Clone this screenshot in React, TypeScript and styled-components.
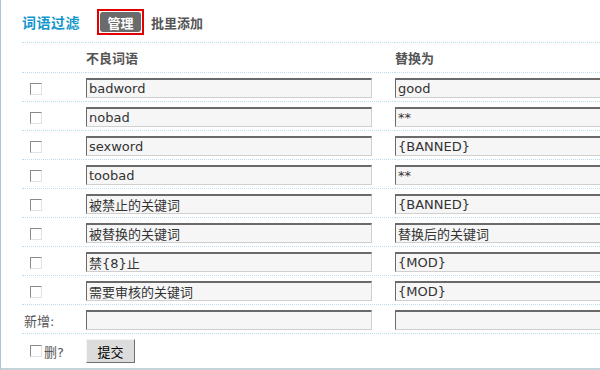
import React from 'react'
import styled, { createGlobalStyle } from 'styled-components'

const GlobalStyle = createGlobalStyle`
  body {
    margin: 0;
    overflow: hidden;
    background: #fff;
    font-family: 'DejaVu Sans', 'Noto Sans CJK SC', sans-serif;
    font-size: 12px;
    color: #555;
  }
`

const words = [
  { find: 'badword', replace: 'good' },
  { find: 'nobad', replace: '**' },
  { find: 'sexword', replace: '{BANNED}' },
  { find: 'toobad', replace: '**' },
  { find: '被禁止的关键词', replace: '{BANNED}' },
  { find: '被替换的关键词', replace: '替换后的关键词' },
  { find: '禁{8}止', replace: '{MOD}' },
  { find: '需要审核的关键词', replace: '{MOD}' },
]

export default function App() {
  return (
    <>
      <GlobalStyle />
      <Frame>
        <Tabs>
          <Title>词语过滤</Title>
          <ActiveTab>
            <span>管理</span>
          </ActiveTab>
          <Tab>批里添加</Tab>
        </Tabs>
        <Grid>
          <colgroup>
            <col style={{ width: 64 }} />
            <col style={{ width: 309 }} />
            <col />
          </colgroup>
          <thead>
            <tr>
              <Head />
              <Head>不良词语</Head>
              <Head>替换为</Head>
            </tr>
          </thead>
          <tbody>
            {words.map((w, i) => (
              <tr key={i}>
                <Cell><Check type="checkbox" /></Cell>
                <Cell><Field defaultValue={w.find} /></Cell>
                <Cell><Field defaultValue={w.replace} /></Cell>
              </tr>
            ))}
            <tr>
              <Cell><Label>新增:</Label></Cell>
              <Cell><Field /></Cell>
              <Cell><Field /></Cell>
            </tr>
            <tr>
              <FootCell>
                <DelLabel><Check type="checkbox" />删?</DelLabel>
              </FootCell>
              <FootCell colSpan={2}>
                <Submit>提交</Submit>
              </FootCell>
            </tr>
          </tbody>
        </Grid>
      </Frame>
    </>
  )
}

const Frame = styled.div`
  width: 600px;
  height: 370px;
  overflow: hidden;
  box-sizing: border-box;
  border-left: 1px solid #a8c6d4;
  border-bottom: 2px solid #c3d3db;
  padding-left: 21px;
`

const Tabs = styled.div`
  display: flex;
  align-items: center;
  height: 42px;
  padding-top: 2px;
  box-sizing: border-box;
`

const Title = styled.h2`
  margin: 0 17px 0 0;
  font-size: 14px;
  font-weight: bold;
  color: #1396cb;
  letter-spacing: 0.5px;
`

const ActiveTab = styled.div`
  width: 47px;
  height: 26px;
  box-sizing: border-box;
  border: 2px solid #e40000;
  padding: 1px;
  display: flex;
  span {
    flex: 1;
    display: flex;
    align-items: center;
    justify-content: center;
    background: #6b6b6b;
    border-radius: 3px;
    color: #fff;
    font-weight: bold;
    font-size: 13px;
  }
`

const Tab = styled.span`
  margin-left: 7px;
  font-size: 13px;
  font-weight: bold;
  color: #555;
`

const Grid = styled.table`
  width: 700px;
  border-collapse: collapse;
  table-layout: fixed;
  border-top: 1px dotted #bcdcef;
`

const Head = styled.th`
  height: 29px;
  padding: 0;
  text-align: left;
  font-size: 13px;
  font-weight: bold;
  color: #555;
  border-bottom: 1px dotted #bcdcef;
`

const Cell = styled.td`
  height: 29px;
  padding: 2px 0 0 0;
  box-sizing: border-box;
  vertical-align: middle;
  border-bottom: 1px dotted #bcdcef;
  &:first-child {
    padding-left: 8px;
  }
`

const FootCell = styled.td`
  height: 35px;
  padding: 0;
  box-sizing: border-box;
  vertical-align: middle;
  &:first-child {
    padding-left: 8px;
  }
`

const Check = styled.input`
  appearance: none;
  margin: 0;
  width: 12px;
  height: 12px;
  box-sizing: border-box;
  border: 1px solid;
  border-color: #8a8a8a #e2e2e2 #e2e2e2 #8a8a8a;
  background: #fff;
  vertical-align: middle;
`

const Field = styled.input`
  display: block;
  width: 286px;
  height: 20px;
  box-sizing: border-box;
  margin: 0;
  padding: 0 2px;
  border: 1px solid;
  border-top-width: 2px;
  border-color: #6a6a6a #cfcfcf #cfcfcf #6a6a6a;
  background: #f6f6f6;
  font-family: 'DejaVu Sans', 'Noto Sans CJK SC', sans-serif;
  font-size: 13px;
  color: #333;
  outline: none;
`

const Label = styled.span`
  margin-left: -6px;
  font-size: 13px;
  color: #555;
`

const DelLabel = styled.label`
  display: flex;
  align-items: center;
  gap: 2px;
  font-size: 13px;
  color: #555;
`

const Submit = styled.button`
  width: 49px;
  height: 24px;
  padding: 0;
  border: 1px solid;
  border-color: #f4f4f4 #6f6f6f #6f6f6f #f4f4f4;
  background: #dcdcdc;
  font-family: 'Noto Sans CJK SC', sans-serif;
  font-size: 13px;
  color: #000;
`
